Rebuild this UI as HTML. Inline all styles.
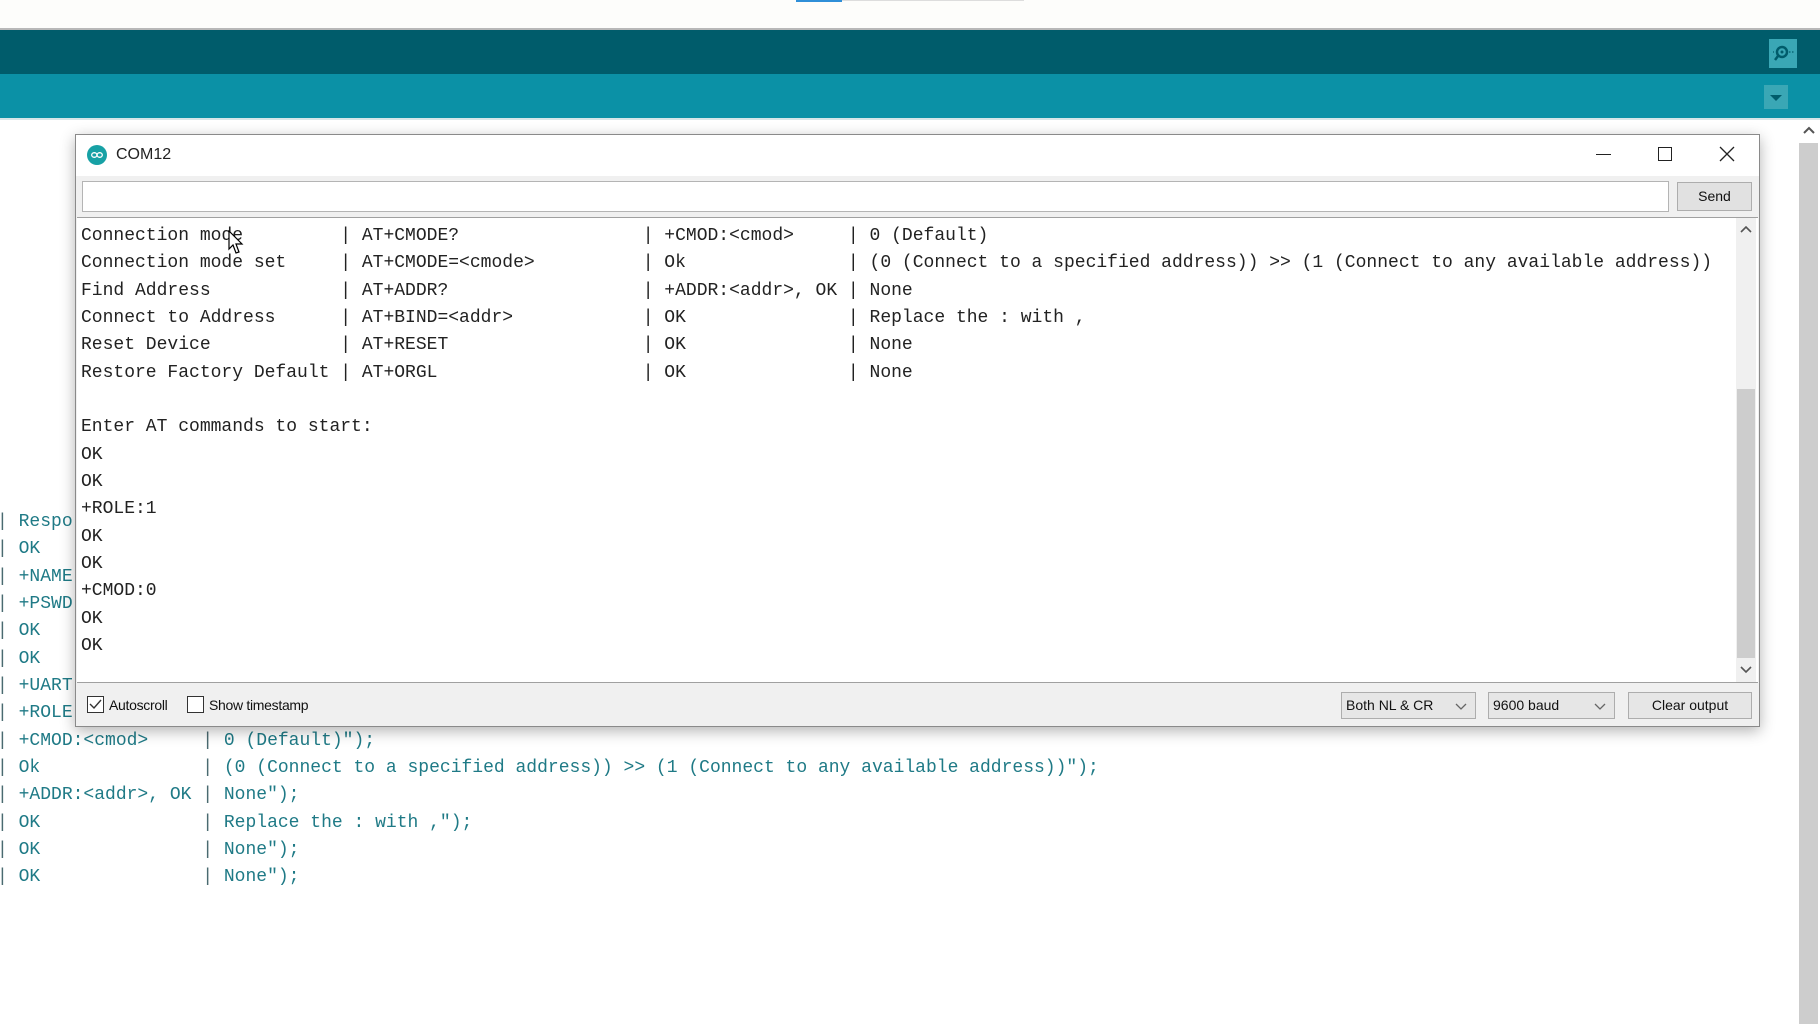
<!DOCTYPE html>
<html><head><meta charset="utf-8"><style>
*{margin:0;padding:0;box-sizing:border-box}
body{width:1820px;height:1024px;overflow:hidden;background:#fff;position:relative;font-family:"Liberation Sans",sans-serif}
.abs{position:absolute}
.mono{font-family:"Liberation Mono",monospace;font-size:18px;white-space:pre;line-height:27.33px}
.bg{color:#1f7a86}
.bg .p{color:#4a6a70}
.tx{color:#222}
.dd{position:absolute;top:692px;height:27px;border:1px solid #adadad;background:#e6e6e6;font-size:14px;color:#111;line-height:25px;padding-left:4px}
.dd svg{position:absolute;right:8px;top:10px}
</style></head><body>
<div class="abs" style="left:0;top:0;width:1820px;height:29px;background:#fdfdfb"></div>
<div class="abs" style="left:796px;top:0;width:46px;height:2px;background:#2f8fd8"></div>
<div class="abs" style="left:842px;top:0;width:182px;height:1px;background:#ddd"></div>
<div class="abs" style="left:0;top:28px;width:1820px;height:2px;background:#b8b8b8"></div>
<div class="abs" style="left:0;top:30px;width:1820px;height:44px;background:#005c6b"></div>
<div class="abs" style="left:0;top:74px;width:1820px;height:45px;background:#0b91a6"></div>
<div class="abs" style="left:0;top:118px;width:1820px;height:2px;background:#d6e6e8"></div>
<div class="abs" style="left:1769px;top:39px;width:28px;height:29px;background:#3aa7b5">
<svg width="28" height="29" viewBox="0 0 28 29"><circle cx="13" cy="13" r="5" fill="none" stroke="#005c6b" stroke-width="2.5"/><circle cx="13" cy="13" r="1.5" fill="#005c6b"/><path d="M9 17 L6 21" stroke="#005c6b" stroke-width="2.5"/><path d="M20 13h1.5M23 13h1.5M5 13h-1" stroke="#005c6b" stroke-width="1.2"/></svg></div>
<div class="abs" style="left:1764px;top:85px;width:24px;height:24px;background:#3aa7b5">
<svg width="24" height="24"><path d="M6 10 L18 10 L12 16Z" fill="#005c6b"/></svg></div>
<div class="abs" style="left:1799px;top:143px;width:19px;height:881px;background:#cdcdcd"></div>
<svg class="abs" style="left:1802px;top:126px" width="14" height="10"><path d="M2 7 L7 2 L12 7" fill="none" stroke="#555" stroke-width="2"/></svg>
<div class="abs mono bg" style="left:-3px;top:509px"><span class="p">| </span>Respo
<span class="p">| </span>OK
<span class="p">| </span>+NAME
<span class="p">| </span>+PSWD
<span class="p">| </span>OK
<span class="p">| </span>OK
<span class="p">| </span>+UART
<span class="p">| </span>+ROLE
<span class="p">| </span>+CMOD:&lt;cmod&gt;     <span class="p">| </span>0 (Default)");
<span class="p">| </span>Ok               <span class="p">| </span>(0 (Connect to a specified address)) &gt;&gt; (1 (Connect to any available address))");
<span class="p">| </span>+ADDR:&lt;addr&gt;, OK <span class="p">| </span>None");
<span class="p">| </span>OK               <span class="p">| </span>Replace the : with ,");
<span class="p">| </span>OK               <span class="p">| </span>None");
<span class="p">| </span>OK               <span class="p">| </span>None");</div>
<div class="abs" style="left:75px;top:134px;width:1685px;height:593px;background:#f0f0f0;border:1px solid #8a8a8a;box-shadow:0 4px 14px rgba(0,0,0,.3)"></div>
<div class="abs" style="left:76px;top:135px;width:1683px;height:41px;background:#fff"></div>
<div class="abs" style="left:87px;top:145px;width:20px;height:20px;border-radius:50%;background:#17a1a5">
<svg width="20" height="20"><ellipse cx="7.3" cy="10" rx="2.6" ry="2.3" fill="none" stroke="#fff" stroke-width="1.3"/><ellipse cx="12.7" cy="10" rx="2.6" ry="2.3" fill="none" stroke="#fff" stroke-width="1.3"/></svg></div>
<div class="abs" style="left:116px;top:146px;font-size:16px;color:#222">COM12</div>
<div class="abs" style="left:1596px;top:154px;width:15px;height:1px;background:#222"></div>
<div class="abs" style="left:1658px;top:147px;width:14px;height:14px;border:1.3px solid #222"></div>
<svg class="abs" style="left:1719px;top:146px" width="16" height="16"><path d="M1 1L15 15M15 1L1 15" stroke="#222" stroke-width="1.3"/></svg>
<div class="abs" style="left:82px;top:181px;width:1587px;height:31px;background:#fff;border:1px solid #b4b4b4"></div>
<div class="abs" style="left:1677px;top:182px;width:75px;height:29px;background:#e1e1e1;border:1px solid #adadad;font-size:14px;text-align:center;line-height:27px;color:#111">Send</div>
<div class="abs" style="left:77px;top:217px;width:1681px;height:466px;background:#fff;border-top:1px solid #a0a0a0;border-bottom:1px solid #a0a0a0"></div>
<div class="abs" style="left:1736px;top:218px;width:20px;height:464px;background:#f0f0f0"></div>
<div class="abs" style="left:1737px;top:389px;width:18px;height:269px;background:#cdcdcd"></div>
<svg class="abs" style="left:1740px;top:226px" width="12" height="8"><path d="M1 6L6 1L11 6" fill="none" stroke="#555" stroke-width="1.6"/></svg>
<svg class="abs" style="left:1740px;top:666px" width="12" height="8"><path d="M1 1L6 6L11 1" fill="none" stroke="#555" stroke-width="1.6"/></svg>
<div class="abs" style="left:77px;top:218px;width:1658px;height:464px;overflow:hidden">
<div class="abs mono tx" style="left:4px;top:5px">Connection mode         | AT+CMODE?                 | +CMOD:&lt;cmod&gt;     | 0 (Default)
Connection mode set     | AT+CMODE=&lt;cmode&gt;          | Ok               | (0 (Connect to a specified address)) &gt;&gt; (1 (Connect to any available address))
Find Address            | AT+ADDR?                  | +ADDR:&lt;addr&gt;, OK | None
Connect to Address      | AT+BIND=&lt;addr&gt;            | OK               | Replace the : with ,
Reset Device            | AT+RESET                  | OK               | None
Restore Factory Default | AT+ORGL                   | OK               | None

Enter AT commands to start:
OK
OK
+ROLE:1
OK
OK
+CMOD:0
OK
OK</div></div>
<svg class="abs" style="left:228px;top:230px" width="18" height="26"><path d="M1 1L1 19L5 15L8 23L11 22L8 14L14 14Z" fill="#fff" stroke="#000" stroke-width="1.2"/></svg>
<div class="abs" style="left:87px;top:696px;width:17px;height:17px;border:1px solid #333;background:#fff">
<svg width="15" height="15"><path d="M2 7L6 11L13 3" fill="none" stroke="#333" stroke-width="1.4"/></svg></div>
<div class="abs" style="left:109px;top:697px;font-size:14px;color:#111;letter-spacing:-.3px">Autoscroll</div>
<div class="abs" style="left:187px;top:696px;width:17px;height:17px;border:1px solid #333;background:#fff"></div>
<div class="abs" style="left:209px;top:697px;font-size:14px;color:#111;letter-spacing:-.3px">Show timestamp</div>
<div class="dd" style="left:1341px;width:135px">Both NL &amp; CR<svg width="12" height="8"><path d="M1 1L6 6L11 1" fill="none" stroke="#666" stroke-width="1.3"/></svg></div>
<div class="dd" style="left:1488px;width:127px">9600 baud<svg width="12" height="8"><path d="M1 1L6 6L11 1" fill="none" stroke="#666" stroke-width="1.3"/></svg></div>
<div class="dd" style="left:1628px;width:124px;text-align:center;padding:0">Clear output</div>
</body></html>
